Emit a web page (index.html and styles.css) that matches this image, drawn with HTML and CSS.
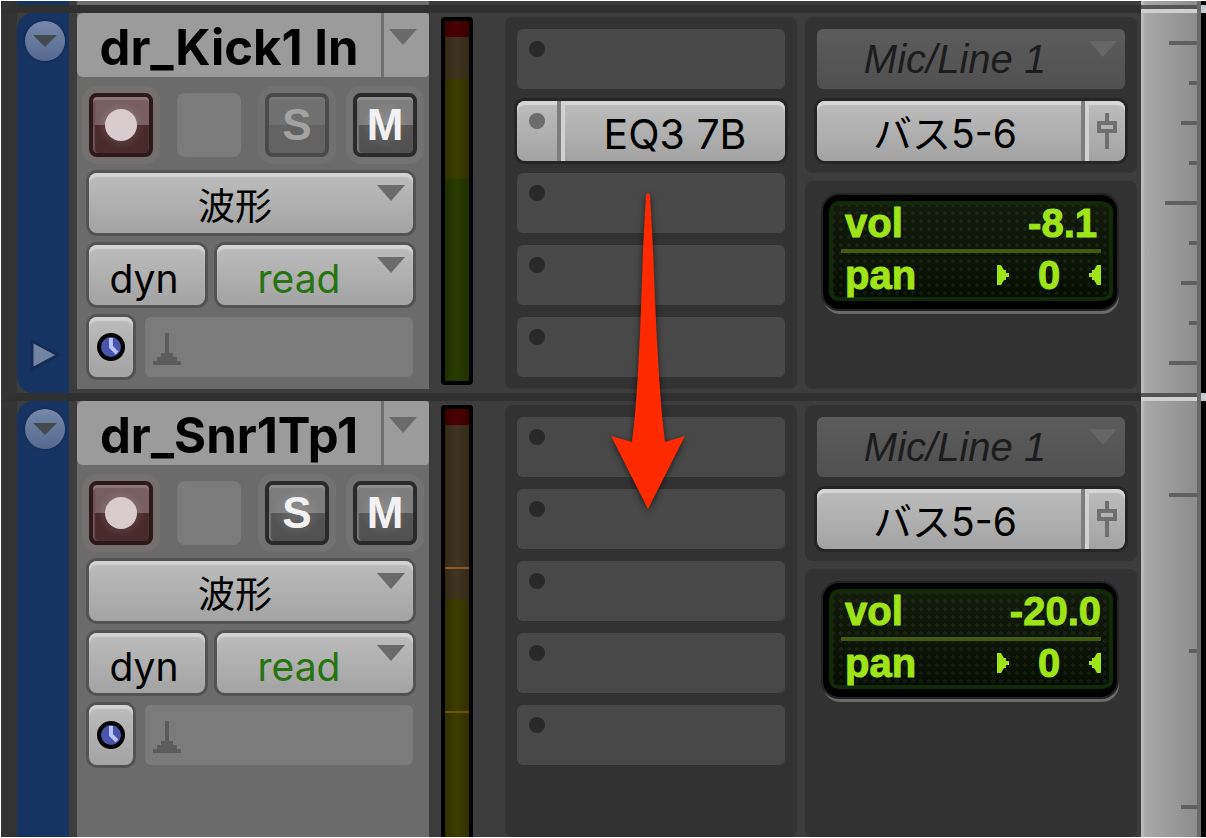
FILE: index.html
```html
<!DOCTYPE html>
<html lang="ja">

<head>
  <meta charset="UTF-8">
  <meta name="viewport" content="width=device-width, initial-scale=1.0">
  <title>Edit Window</title>
  <link rel="stylesheet" href="styles.css">
</head>

<body>
  <!-- bottom edge of the previous track -->
  <div class="track track-prev">
    <div class="strip">
      <div class="color-bar"></div>
      <div class="panel"></div>
    </div>
    <div class="ruler"></div>
    <div class="edge"></div>
  </div>

  <!-- kick -->
  <section class="track">
    <div class="strip">
      <div class="color-bar">
        <button class="round" aria-label="Track options"><svg width="24" height="12"><path d="M0 0H24L12 12Z" /></svg></button>
        <button class="expand" aria-label="Show lanes"><svg width="36" height="36"><path d="M7 4L33 18L7 32Z" /></svg></button>
      </div>
      <div class="panel">
        <div class="name">
          <button class="name-text">dr_Kick1 In</button>
          <button class="name-menu" aria-label="Playlist"><svg width="28" height="16"><path d="M0 0H28L14 16Z" /></svg></button>
        </div>
        <div class="body">
          <div class="buttons">
            <button class="key rec" aria-label="Record"><i></i></button>
            <span class="blank"></span>
            <button class="key off">S</button>
            <button class="key">M</button>
          </div>
          <div class="drop">
            <select class="face" aria-label="Track view"><option>波形</option></select>
            <svg width="28" height="16"><path d="M0 0H28L14 16Z" /></svg>
          </div>
          <div class="line">
            <button class="face dyn">dyn</button>
            <div class="drop grow">
              <select class="face read" aria-label="Automation"><option>read</option></select>
              <svg width="28" height="16"><path d="M0 0H28L14 16Z" /></svg>
            </div>
          </div>
          <div class="line">
            <button class="face clock" aria-label="Timebase"><svg width="28" height="28"><circle cx="14" cy="14" r="12" fill="#4a55ad" stroke="#000" stroke-width="4" /><path d="M14 5V14L20 20" fill="none" stroke="#b9c4ff" stroke-width="4" /></svg></button>
            <div class="elastic"><svg width="28" height="32"><path d="M12 0h4v20h4v4h4v4h4v4H0v-4h4v-4h4v-4h4z" /></svg></div>
          </div>
        </div>
      </div>
      <div class="meter meter-kick"></div>
      <div class="inserts">
        <button class="slot" aria-label="Insert A"><i></i></button>
        <div class="slot filled">
          <button class="slot-dot" aria-label="Insert B"><i></i></button>
          <button class="slot-name">EQ3 7B</button>
        </div>
        <button class="slot" aria-label="Insert C"><i></i></button>
        <button class="slot" aria-label="Insert D"><i></i></button>
        <button class="slot" aria-label="Insert E"><i></i></button>
      </div>
      <div class="io">
        <div class="io-box">
          <div class="drop">
            <select class="input" aria-label="Input"><option>Mic/Line 1</option></select>
            <svg width="28" height="16"><path d="M0 0H28L14 16Z" /></svg>
          </div>
          <div class="slot filled">
            <button class="slot-name output">バス5-6</button>
            <button class="fader" aria-label="Output window"><svg width="20" height="36"><path d="M8 0h4v8h8v12h-8v16H8V20H0V8h8zM4 12v4h12v-4z" fill-rule="evenodd" /></svg></button>
          </div>
        </div>
        <div class="io-box lcd-box">
          <dl class="lcd">
            <div class="lcd-row"><dt>vol</dt><dd class="vol-kick">-8.1</dd></div>
            <div class="lcd-row"><dt>pan</dt><dd class="pan"><svg width="12" height="20"><path d="M0 0h4l3 5h2v3h3v4H9v3H7l-3 5H0z" /></svg>0<svg width="12" height="20"><path d="M12 0H8L5 5H3v3H0v4h3v3h2l3 5h4z" /></svg></dd></div>
          </dl>
        </div>
      </div>
    </div>
    <div class="ruler">
      <svg width="32" height="340"><path d="M4 18H32M24 58H32M16 98H32M24 138H32M0 178H32M24 218H32M16 258H32M24 298H32M4 338H32" /></svg>
    </div>
    <div class="edge"></div>
  </section>

  <!-- snare -->
  <section class="track track-last">
    <div class="strip">
      <div class="color-bar">
        <button class="round" aria-label="Track options"><svg width="24" height="12"><path d="M0 0H24L12 12Z" /></svg></button>
      </div>
      <div class="panel">
        <div class="name">
          <button class="name-text">dr_Snr1Tp1</button>
          <button class="name-menu" aria-label="Playlist"><svg width="28" height="16"><path d="M0 0H28L14 16Z" /></svg></button>
        </div>
        <div class="body">
          <div class="buttons">
            <button class="key rec" aria-label="Record"><i></i></button>
            <span class="blank"></span>
            <button class="key">S</button>
            <button class="key">M</button>
          </div>
          <div class="drop">
            <select class="face" aria-label="Track view"><option>波形</option></select>
            <svg width="28" height="16"><path d="M0 0H28L14 16Z" /></svg>
          </div>
          <div class="line">
            <button class="face dyn">dyn</button>
            <div class="drop grow">
              <select class="face read" aria-label="Automation"><option>read</option></select>
              <svg width="28" height="16"><path d="M0 0H28L14 16Z" /></svg>
            </div>
          </div>
          <div class="line">
            <button class="face clock" aria-label="Timebase"><svg width="28" height="28"><circle cx="14" cy="14" r="12" fill="#4a55ad" stroke="#000" stroke-width="4" /><path d="M14 5V14L20 20" fill="none" stroke="#b9c4ff" stroke-width="4" /></svg></button>
            <div class="elastic"><svg width="28" height="32"><path d="M12 0h4v20h4v4h4v4h4v4H0v-4h4v-4h4v-4h4z" /></svg></div>
          </div>
        </div>
      </div>
      <div class="meter meter-snare"></div>
      <div class="inserts">
        <button class="slot" aria-label="Insert A"><i></i></button>
        <button class="slot" aria-label="Insert B"><i></i></button>
        <button class="slot" aria-label="Insert C"><i></i></button>
        <button class="slot" aria-label="Insert D"><i></i></button>
        <button class="slot" aria-label="Insert E"><i></i></button>
      </div>
      <div class="io">
        <div class="io-box">
          <div class="drop">
            <select class="input" aria-label="Input"><option>Mic/Line 1</option></select>
            <svg width="28" height="16"><path d="M0 0H28L14 16Z" /></svg>
          </div>
          <div class="slot filled">
            <button class="slot-name output">バス5-6</button>
            <button class="fader" aria-label="Output window"><svg width="20" height="36"><path d="M8 0h4v8h8v12h-8v16H8V20H0V8h8zM4 12v4h12v-4z" fill-rule="evenodd" /></svg></button>
          </div>
        </div>
        <div class="io-box lcd-box">
          <dl class="lcd">
            <div class="lcd-row"><dt>vol</dt><dd>-20.0</dd></div>
            <div class="lcd-row"><dt>pan</dt><dd class="pan"><svg width="12" height="20"><path d="M0 0h4l3 5h2v3h3v4H9v3H7l-3 5H0z" /></svg>0<svg width="12" height="20"><path d="M12 0H8L5 5H3v3H0v4h3v3h2l3 5h4z" /></svg></dd></div>
          </dl>
        </div>
      </div>
    </div>
    <div class="ruler">
      <svg width="32" height="410"><path d="M4 82H32M24 238H32M16 394H32" /></svg>
    </div>
    <div class="edge"></div>
  </section>

  <!-- drag arrow -->
  <svg class="arrow" width="90" height="334" viewBox="0 0 90 334">
    <path d="M43 6Q45 2 47 6L50 60Q55 200 62 253L82 247L45 320L8 247L29 253Q36 200 40 60Z" />
  </svg>
</body>

</html>
```
FILE: styles.css
```css
* {
  box-sizing: border-box;
  margin: 0;
  padding: 0;
}

body {
  position: relative;
  display: flex;
  flex-direction: column;
  min-height: 100vh;
  padding: 1px 0 1px 1px;
  background: #fff;
  font-family: Inter, "Noto Sans CJK JP", sans-serif;
  font-size: 39px;
  color: #000;
}

button,
select {
  border: 0;
  background: none;
  color: inherit;
  font: inherit;
  appearance: none;
}

svg {
  display: block;
}

/* track rows */
.track {
  display: flex;
}

.track-last {
  flex: 1;
}

.strip {
  flex: 1;
  display: grid;
  grid-template-columns: 52px 372fr 32px 332fr 332fr;
  padding-right: 4px;
  border-left: 16px solid #333;
  border-bottom: 8px solid #303030;
  background: #3c3c3c;
}

.track-prev .strip {
  height: 12px;
}

.track-last .strip {
  border-bottom: 0;
}

/* colour bar */
.color-bar {
  display: flex;
  flex-direction: column;
  align-items: center;
  justify-content: space-between;
  padding: 8px 0 20px;
  border-radius: 16px 0 0 16px;
  background: #163462;
}

.track-prev .color-bar {
  padding: 0;
  border-radius: 0;
}

.track-last .color-bar {
  border-radius: 16px 0 0 0;
}

.round {
  display: flex;
  align-items: center;
  justify-content: center;
  width: 40px;
  height: 40px;
  margin-left: 4px;
  border-radius: 50%;
  background: linear-gradient(#7689ab, #55698f);
  box-shadow: 0 0 2px 1px #122a50;
  fill: #45494f;
}

.expand {
  fill: #7384a3;
  stroke: #122c56;
  stroke-width: 3;
}

/* control panel */
.panel {
  margin: 0 12px 4px 8px;
  background: #6b6b6b;
}

.track-prev .panel,
.track-last .panel {
  margin-bottom: 0;
}

.name {
  display: flex;
  height: 64px;
}

.name-text {
  flex: 1;
  padding-top: 4px;
  border-radius: 6px 0 0 6px;
  background: #9b9b9b;
  font-size: 49px;
  font-weight: 700;
  white-space: nowrap;
}

.name-menu {
  width: 48px;
  padding: 16px 0 0 5px;
  border-left: 3px solid #707070;
  border-radius: 0 4px 4px 0;
  background: #9b9b9b;
  fill: #6a6a6a;
}

.name-menu svg {
  margin-bottom: 32px;
}

.body {
  display: flex;
  flex-direction: column;
  gap: 12px;
  padding: 16px 16px 12px 12px;
}

.buttons {
  display: flex;
  justify-content: space-between;
  margin: 0 -4px 4px 0;
}

.key,
.blank {
  display: flex;
  align-items: center;
  justify-content: center;
  width: 64px;
  height: 64px;
  border-radius: 8px;
}

.key {
  border: 4px solid #2a2a2a;
  background: radial-gradient(circle, #ffffff22, #ffffff00 60%), linear-gradient(#7d7d7d 50%, #555 50%, #505050);
  box-shadow: 0 0 0 7px #727272, inset 0 3px 1px #8e8e8e, inset 2px 0 1px #777;
  color: #f2f2f2;
  font-family: "Liberation Sans", sans-serif;
  font-size: 44px;
  font-weight: 700;
}

.key.off {
  border-color: #4a4a4a;
  background: linear-gradient(#707070 50%, #636363 50%);
  box-shadow: 0 0 0 7px #707070, inset 0 2px 1px #7b7b7b;
  color: #a2a2a2;
}

.key.rec {
  border-color: #2d191a;
  background: radial-gradient(circle, #ffffff33, #ffffff00 60%), linear-gradient(#775f61 50%, #4b2a2b 50%, #482b2c);
  box-shadow: 0 0 0 7px #74706f, inset 0 3px 1px #8b7879, inset 2px 0 1px #6b4f51;
}

.rec i {
  width: 32px;
  height: 32px;
  border-radius: 50%;
  background: #d8cccf;
}

.blank {
  background: #7b7b7b;
}

.line {
  display: flex;
  gap: 12px;
}

.face {
  height: 60px;
  padding-top: 6px;
  border-radius: 8px;
  background: linear-gradient(#bdbdbd, #a3a3a3);
  box-shadow: 0 0 0 3px #535353, inset 0 4px 1px #d2d2d2;
}

.dyn {
  width: 116px;
  padding-right: 6px;
}

.grow {
  flex: 1;
}

.drop {
  position: relative;
}

.drop select {
  display: block;
  width: 100%;
  padding-right: 32px;
  text-align: center;
  text-align-last: center;
}

.drop .face {
  font-size: 37px;
}

.drop .read {
  color: #267310;
  font-size: 39px;
}

.drop svg {
  position: absolute;
  top: 12px;
  right: 8px;
  fill: #6a6a6a;
  pointer-events: none;
}

.clock {
  display: flex;
  align-items: center;
  justify-content: center;
  width: 44px;
  padding: 0;
}

.elastic {
  flex: 1;
  height: 60px;
  padding: 16px 8px;
  border-radius: 6px;
  background: #7b7b7b;
  fill: #5c5c5c;
}

/* meters */
.meter {
  margin: 4px 0 8px;
  border: 4px solid #000;
  border-radius: 4px;
}

.track-prev .meter {
  display: none;
}

.meter-kick {
  background: linear-gradient(90deg, #0003, #0000 50%, #0003),
    linear-gradient(#4b0000 16px, #40341f 16px 58px, #3c3c00 58px 158px, #293b00 158px);
}

.meter-snare {
  margin-bottom: 0;
  border-bottom: 0;
  border-radius: 4px 4px 0 0;
  background: linear-gradient(#0000 158px, #8a5a20 158px 160px, #0000 160px 302px, #6d5200 302px 304px, #0000 304px),
    linear-gradient(90deg, #0003, #0000 50%, #0003),
    linear-gradient(#4b0000 16px, #40341f 16px 190px, #3c3c00 190px);
}

/* inserts */
.inserts,
.io-box {
  display: flex;
  flex-direction: column;
  gap: 12px;
  padding: 12px;
  border-radius: 8px;
  background: #323232;
}

.inserts {
  margin: 4px 8px 4px 32px;
}

.slot {
  display: flex;
  height: 60px;
  padding: 12px;
  border-radius: 6px;
  background: #484848;
}

.slot i {
  width: 16px;
  height: 16px;
  border-radius: 50%;
  background: #292929;
}

.filled {
  padding: 0;
  border-radius: 8px;
  background: linear-gradient(#bdbdbd, #a3a3a3);
  box-shadow: 0 0 0 3px #252525, inset 0 4px 1px #d6d6d6;
}

.slot-dot {
  display: flex;
  width: 44px;
  padding: 12px;
  border-right: 4px solid #7d7d7d;
}

.slot-dot i {
  flex: none;
  background: #6c6c6c;
}

.slot-name {
  flex: 1;
  padding-top: 6px;
  border-left: 4px solid #d2d2d2;
  font-size: 41px;
}

.output {
  padding: 0 8px 0 0;
  border-left: 0;
  font-size: 39px;
  line-height: 66px;
}

/* input and output */
.io {
  display: flex;
  flex-direction: column;
  gap: 8px;
  margin: 4px 0;
}

.track-last .inserts,
.track-last .io {
  margin-bottom: 0;
}

.input {
  height: 60px;
  border-radius: 6px;
  background: linear-gradient(#5c5c5c, #505050);
  color: #1c1c1c;
  font-family: "Liberation Sans", sans-serif;
  font-size: 40px;
  font-style: italic;
}

.drop .input + svg {
  fill: #666;
}

.fader {
  width: 44px;
  padding: 0 8px 0 8px;
  border-left: 4px solid #7d7d7d;
  box-shadow: inset 4px 0 #d2d2d2;
  fill: #6f6f6f;
}

.fader svg {
  margin-left: 4px;
}

.lcd-box {
  flex: 1;
  padding: 14px 20px 12px 18px;
}

.lcd {
  padding: 0 12px;
  border: solid #000;
  border-width: 6px 4px 8px 6px;
  border-radius: 16px;
  background: radial-gradient(circle, #ffffff0d 2px, #0000 2px) 0 0 / 8px 8px,
    linear-gradient(#141d0c, #040d00);
  box-shadow: 0 0 0 2px #222, 1px 4px 0 1px #6a6a6a, inset 0 0 0 4px #132a0a;
  color: #9fe319;
  font-family: "Liberation Sans", sans-serif;
  font-size: 40px;
  font-weight: 700;
  line-height: 44px;
  -webkit-text-stroke: 1px #9fe319;
}

.lcd-row {
  display: flex;
  justify-content: space-between;
  height: 48px;
  padding-left: 4px;
}

.lcd-row:first-child {
  height: 52px;
  border-bottom: 4px solid #435a13;
}

.vol-kick {
  padding-right: 4px;
}

.pan {
  display: flex;
  align-items: center;
  justify-content: space-between;
  width: 104px;
  height: 44px;
}

.pan svg {
  fill: #9fe319;
}

/* ruler on the right */
.ruler {
  width: 60px;
  padding-top: 12px;
  border-right: 4px solid #696969;
  background: linear-gradient(#555 4px, #d0d0d0 4px) 0 100% / 100% 8px no-repeat,
    linear-gradient(90deg, #bbb 2px, #a8a8a8 4px, #8d8d8d);
}

.track-last .ruler {
  background: linear-gradient(90deg, #bbb 2px, #a8a8a8 4px, #8d8d8d);
}

.ruler svg {
  margin-left: auto;
  stroke: #606060;
  stroke-width: 4;
}

.edge {
  width: 5px;
  border-bottom: 8px solid #c4c9cc;
  background: #000;
}

.track-last .edge {
  border: 0;
}

/* drag arrow */
.arrow {
  position: absolute;
  top: 189px;
  left: 603px;
  fill: #ff2a00;
  filter: drop-shadow(0 2px 3px #0009);
}
```
